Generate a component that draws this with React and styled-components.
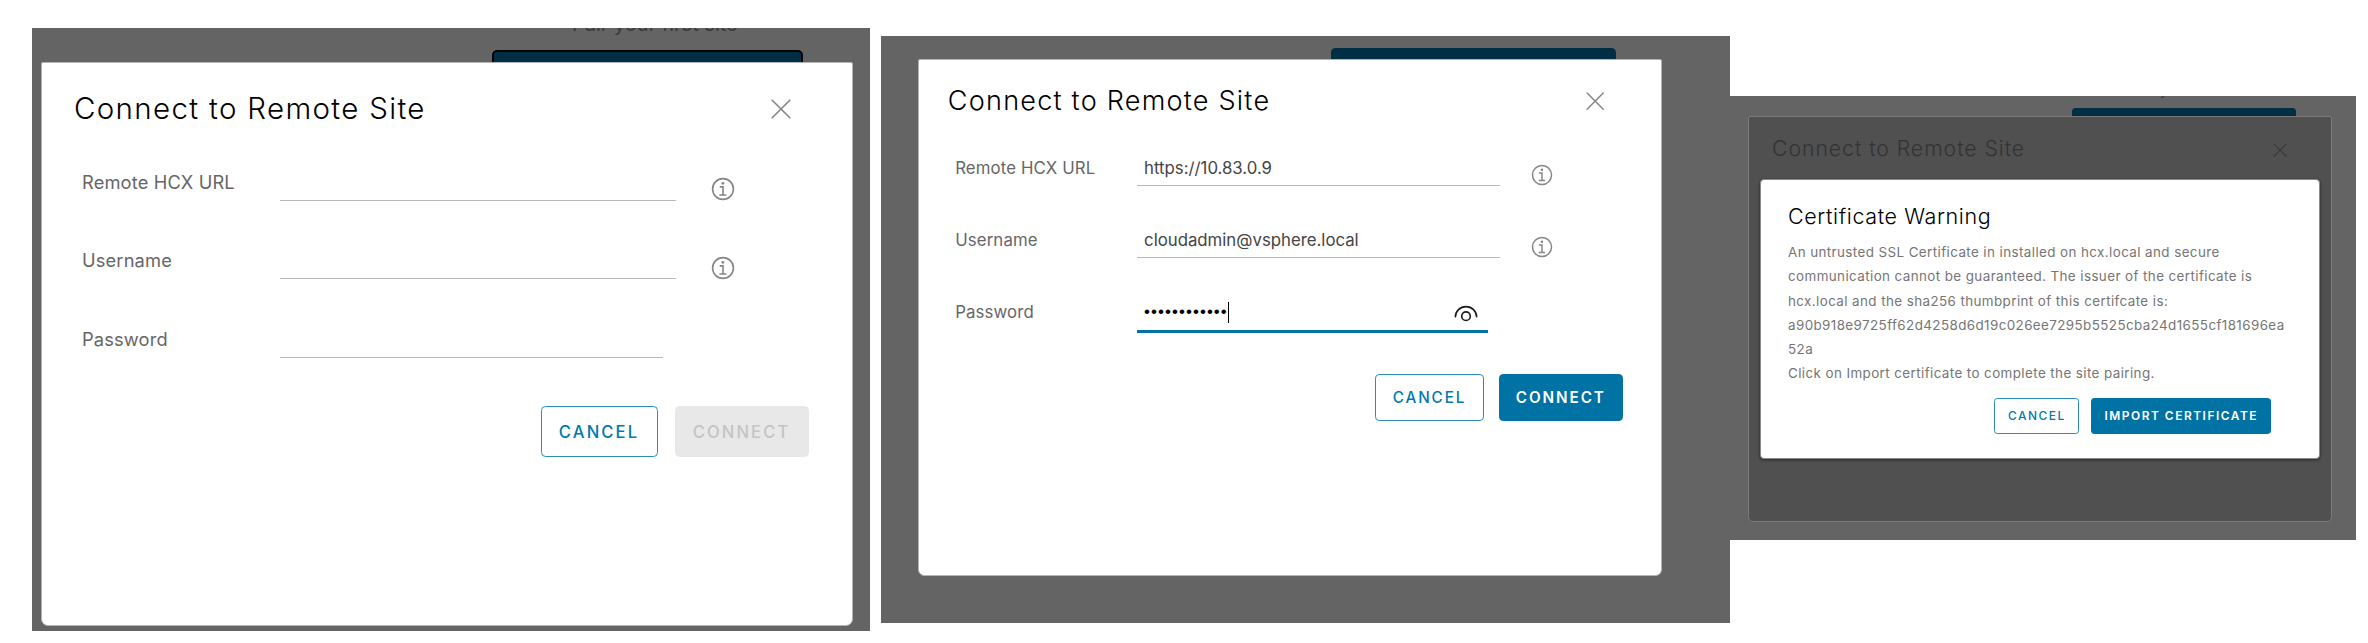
import React from "react";
import styled, { createGlobalStyle, css, ThemeProvider } from "styled-components";

const GlobalStyle = createGlobalStyle`
  *, *::before, *::after { box-sizing: border-box; }
  body {
    margin: 0;
    background: #fff;
    font-family: Inter, "Liberation Sans", sans-serif;
  }
`;

/* length that follows the zoom level of the surrounding panel */
const u = (n) => ({ theme }) => `${+(n * theme.zoom).toFixed(2)}px`;

const Page = styled.main`
  display: flex;
  align-items: flex-start;
  width: 2368px;
  height: 643px;
  padding-left: 32px;
  overflow: hidden;
`;

const Panel = styled.section`
  position: relative;
  flex: none;
  width: ${(p) => p.$width}px;
  height: ${(p) => p.$height}px;
  margin: ${(p) => p.$top}px ${(p) => p.$gap || 0}px 0 0;
  background: #646464;
  overflow: hidden;
`;

const Behind = styled.div`
  padding-left: ${(p) => p.$left}px;
`;

const BehindCaption = styled.div`
  display: flex;
  flex-direction: column;
  justify-content: flex-end;
  height: ${(p) => p.$height}px;
  padding: 0 0 ${u(13.6)} ${u(80)};
  color: #3a3a3a;
  font-size: ${u(20)};
  line-height: ${u(24)};
  white-space: nowrap;
`;

const BehindButton = styled.div`
  width: ${u(311)};
  height: ${u(50)};
  border-radius: ${u(5)};
  background: #002e44;
  ${(p) => p.$focused && css`border: 2px solid #000;`}
`;

const Dialog = styled.div`
  position: absolute;
  left: ${(p) => p.$left}px;
  top: ${(p) => p.$top}px;
  width: ${(p) => p.$width}px;
  height: ${(p) => p.$height}px;
  display: flex;
  flex-direction: column;
  border: 1px solid ${(p) => (p.$dimmed ? "#7a7a7a" : "#b4b4b4")};
  border-radius: 2px 2px ${u(7)} ${u(7)};
  background: ${(p) => (p.$dimmed ? "#505050" : "#fff")};
`;

const Header = styled.header`
  display: flex;
  justify-content: space-between;
  align-items: flex-start;
  padding: ${u(26.6)} ${u(61.3)} 0 ${u(32)};
  color: ${(p) => (p.$dimmed ? "#333" : "#000")};
`;

const Title = styled.h1`
  margin: 0;
  font-size: ${u(29.5)};
  font-weight: 300;
  line-height: ${u(36)};
  letter-spacing: ${u(1.33)};
  white-space: nowrap;
`;

const CloseIcon = styled.svg`
  display: block;
  width: ${u(20)};
  height: ${u(20)};
  margin-top: ${u(9.3)};
  fill: none;
  stroke: ${(p) => (p.$dimmed ? "#3c3c3c" : "#858585")};
  stroke-width: 1.6;
  stroke-linecap: round;
`;

const Form = styled.div`
  display: flex;
  flex-direction: column;
  padding: ${u(35)} 0 0 ${u(40)};
`;

const Field = styled.div`
  display: flex;
  align-items: flex-start;
  height: ${u(78.6)};
`;

const Label = styled.label`
  width: ${u(198)};
  color: #666;
  font-size: ${u(18.3)};
  line-height: ${u(40)};
  letter-spacing: ${u(0.14)};
  padding-top: ${u(1)};
  white-space: nowrap;
`;

const Input = styled.div`
  display: flex;
  align-items: flex-start;
  width: ${(p) => (p.$short ? u(383) : u(396))};
  height: ${(p) => (p.$active ? u(43) : u(40))};
  padding: ${u(1)} ${u(8)} 0;
  border-bottom: ${(p) => (p.$active ? "3px solid #0072a3" : "1px solid #b8b8b8")};
  color: #444;
  font-size: ${u(18.3)};
  line-height: ${u(40)};
  white-space: nowrap;
`;

const Dots = styled.span`
  color: #000;
  font-family: "Liberation Sans", sans-serif;
  font-size: ${u(18.5)};
  letter-spacing: 1.05px;
`;

const Caret = styled.span`
  width: 1px;
  height: ${u(23)};
  margin-top: ${u(9)};
  background: #000;
`;

const EyeIcon = styled.svg`
  width: 24px;
  height: 18px;
  margin: ${u(12.5)} ${u(3)} 0 auto;
  fill: none;
  stroke: #1b1b1b;
  stroke-width: 1.6;
  stroke-linecap: round;
`;

const InfoIcon = styled.svg`
  width: ${u(24)};
  height: ${u(24)};
  margin: ${u(16.7)} 0 0 ${u(34.5)};
  fill: none;
  stroke: #858585;
  stroke-width: 1.6;
`;

const Actions = styled.footer`
  display: flex;
  justify-content: flex-end;
  gap: ${u(17)};
  padding: ${(p) => p.$padding || 0};
`;

const tones = {
  outline: css`
    border: 1px solid #2b8cb8;
    color: #0079ad;
    background: #fff;
  `,
  solid: css`
    border: 1px solid #0072a3;
    color: #fff;
    background: #0072a3;
    font-weight: 600;
  `,
  disabled: css`
    border: 1px solid #e8e8e8;
    color: #c4c4c4;
    background: #e8e8e8;
  `,
};

const Button = styled.button`
  display: flex;
  align-items: center;
  justify-content: center;
  width: ${(p) => u(p.$width)};
  height: ${u(50.6)};
  padding: 0;
  border-radius: ${u(4.5)};
  font-family: inherit;
  font-size: ${u(16.6)};
  font-weight: 500;
  letter-spacing: ${u(2.1)};
  white-space: nowrap;
  ${(p) => tones[p.$tone]}
`;

const Warning = styled.div`
  position: absolute;
  left: 30px;
  top: 83px;
  width: 560px;
  height: 280px;
  padding: 22px 48px 0 27px;
  border: 1px solid #8a8a8a;
  border-radius: 4px;
  background: #fff;
  box-shadow: 0 1px 2px 1px #383838;
`;

const WarningTitle = styled.h2`
  margin: 0 0 10px;
  color: #000;
  font-size: 21.5px;
  font-weight: 300;
  line-height: 28px;
  letter-spacing: 0.62px;
`;

const WarningText = styled.p`
  margin: 0 0 12px;
  color: #757575;
  font-size: 13.4px;
  line-height: 24.25px;
  letter-spacing: 0.41px;
  white-space: nowrap;
`;

function DialogHeader({ dimmed }) {
  return (
    <Header $dimmed={dimmed}>
      <Title>Connect to Remote Site</Title>
      <CloseIcon viewBox="0 0 20 20" $dimmed={dimmed}>
        <path d="M1.2 1.2 18.8 18.8M18.8 1.2 1.2 18.8" />
      </CloseIcon>
    </Header>
  );
}

function Info() {
  return (
    <InfoIcon viewBox="0 0 24 24">
      <circle cx="12" cy="12" r="10.4" />
      <path d="M8.7 9.9H12V18M8.4 18H15.4" />
      <circle cx="11.9" cy="6.3" r="1.4" fill="#858585" stroke="none" />
    </InfoIcon>
  );
}

function SiteForm({ url, user, password }) {
  return (
    <Form>
      <Field>
        <Label>Remote HCX URL</Label>
        <Input>{url}</Input>
        <Info />
      </Field>
      <Field>
        <Label>Username</Label>
        <Input>{user}</Input>
        <Info />
      </Field>
      <Field>
        <Label>Password</Label>
        <Input $short $active={Boolean(password)}>
          {password && (
            <>
              <Dots>{password}</Dots>
              <Caret />
              <EyeIcon viewBox="0 0 24 18">
                <path d="M1.4 11.8A10.6 10.2 0 0 1 22.6 11.8" />
                <circle cx="12" cy="11.2" r="4.3" />
              </EyeIcon>
            </>
          )}
        </Input>
      </Field>
    </Form>
  );
}

function Backdrop({ left, top, focused, caption }) {
  return (
    <Behind $left={left}>
      <BehindCaption $height={top}>{caption}</BehindCaption>
      <BehindButton $focused={focused} />
    </Behind>
  );
}

export default function App() {
  return (
    <>
      <GlobalStyle />
      <Page>
        <ThemeProvider theme={{ zoom: 1 }}>
          <Panel $width={838} $height={603} $top={28} $gap={11}>
            <Backdrop left={460} top={22} focused caption="Pair your first site" />
            <Dialog $left={9} $top={34} $width={812} $height={564}>
              <DialogHeader />
              <SiteForm />
              <Actions $padding="10px 43.5px 0 0">
                <Button $tone="outline" $width={117}>CANCEL</Button>
                <Button $tone="disabled" $width={134} disabled>CONNECT</Button>
              </Actions>
            </Dialog>
          </Panel>
        </ThemeProvider>

        <ThemeProvider theme={{ zoom: 0.917 }}>
          <Panel $width={849} $height={587} $top={36}>
            <Backdrop left={450} top={12} />
            <Dialog $left={36.5} $top={22.5} $width={744.5} $height={517.5}>
              <DialogHeader />
              <SiteForm
                url="https://10.83.0.9"
                user="cloudadmin@vsphere.local"
                password="••••••••••••"
              />
              <Actions $padding="9px 38.5px 0 0">
                <Button $tone="outline" $width={118}>CANCEL</Button>
                <Button $tone="solid" $width={134.5}>CONNECT</Button>
              </Actions>
            </Dialog>
          </Panel>
        </ThemeProvider>

        <ThemeProvider theme={{ zoom: 0.7195 }}>
          <Panel $width={626} $height={444} $top={96}>
            <Backdrop left={342} top={12} caption="Pair your first site" />
            <Dialog $left={18} $top={20} $width={584} $height={405.5} $dimmed>
              <DialogHeader dimmed />
            </Dialog>
            <Warning>
              <WarningTitle>Certificate Warning</WarningTitle>
              <WarningText>
                An untrusted SSL Certificate in installed on hcx.local and secure
                <br />
                communication cannot be guaranteed. The issuer of the certificate is
                <br />
                hcx.local and the sha256 thumbprint of this certifcate is:
                <br />
                a90b918e9725ff62d4258d6d19c026ee7295b5525cba24d1655cf181696ea
                <br />
                52a
                <br />
                Click on Import certificate to complete the site pairing.
              </WarningText>
              <Actions>
                <Button $tone="outline" $width={118}>CANCEL</Button>
                <Button $tone="solid" $width={249.5}>IMPORT CERTIFICATE</Button>
              </Actions>
            </Warning>
          </Panel>
        </ThemeProvider>
      </Page>
    </>
  );
}
